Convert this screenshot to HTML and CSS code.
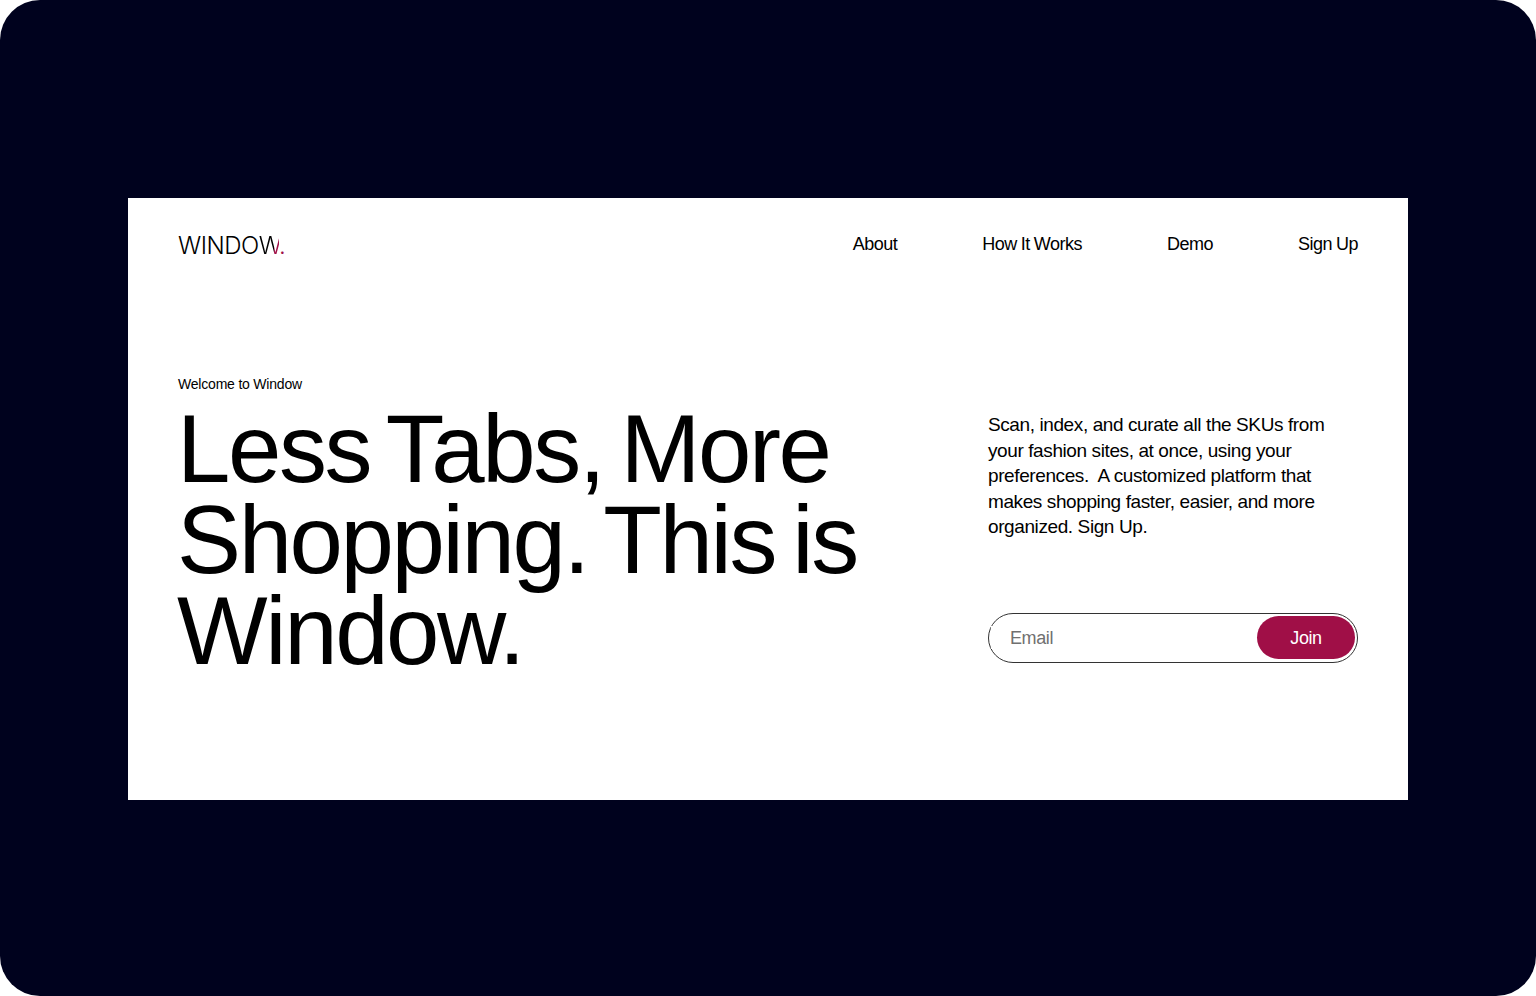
FILE: index.html
```html
<!DOCTYPE html>
<html lang="en">
<head>
    <meta charset="UTF-8">
    <title>Window</title>
    <link rel="stylesheet" href="styles.css">
</head>
<body>
    <div class="frame">
        <div class="page">
            <!-- Nav -->
            <div class="nav">
                <div class="logo">WINDO<span class="logo-w">W</span><span class="logo-dot">.</span></div>
                <div class="links">
                    <a href="#">About</a>
                    <a href="#">How It Works</a>
                    <a href="#">Demo</a>
                    <a href="#">Sign Up</a>
                </div>
            </div>

            <!-- Hero -->
            <div class="hero">
                <div class="hero-left">
                    <div class="welcome">Welcome to Window</div>
                    <h1>Less Tabs, More Shopping. This is Window.</h1>
                </div>
                <div class="hero-right">
                    <p>Scan, index, and curate all the SKUs from your fashion sites, at once, using your preferences.&nbsp; A customized platform that makes shopping faster, easier, and more organized. Sign Up.</p>
                    <form class="signup">
                        <input type="text" placeholder="Email">
                        <button type="button">Join</button>
                    </form>
                </div>
            </div>
        </div>
    </div>
</body>
</html>
```

FILE: styles.css
```css
html, body {
    margin: 0;
    height: 100%;
    background-color: #fff;
}

body {
    font-family: "Liberation Sans", Arial, sans-serif;
    color: #000;
    overflow: hidden;
}

.frame {
    height: 996px;
    box-sizing: border-box;
    background-color: #00021e;
    border-radius: 40px;
    padding: 198px 128px 196px;
}

.page {
    height: 602px;
    box-sizing: border-box;
    background-color: #fff;
    padding: 34px 50px 0;
}

.nav {
    display: flex;
    justify-content: space-between;
    align-items: center;
    height: 24px;
}

.logo {
    font-family: Inter, "Liberation Sans", sans-serif;
    font-size: 24px;
    font-weight: 300;
    letter-spacing: -0.5px;
    margin-top: 2px;
}

/* last stroke of the W is the accent colour */
.logo-w {
    background: linear-gradient(to right, #000 75%, #a00f47 75%);
    -webkit-background-clip: text;
    background-clip: text;
    color: transparent;
}

.logo-dot {
    color: #a00f47;
}

.links {
    display: flex;
    gap: 85px;
}

.links a {
    color: #000;
    text-decoration: none;
    font-size: 18px;
    letter-spacing: -0.5px;
    word-spacing: -0.5px;
}

.hero {
    display: flex;
    justify-content: space-between;
    margin-top: 116px;
}

.hero-left {
    width: 720px;
}

.welcome {
    font-size: 14px;
    letter-spacing: -0.2px;
    line-height: 24px;
}

h1 {
    margin: 7px 0 0 -1px;
    font-size: 96px;
    font-weight: normal;
    line-height: 91px;
    letter-spacing: -2.4px;
    word-spacing: -7px;
}

.hero-right {
    width: 370px;
    padding-top: 40px;
}

.hero-right p {
    margin: 0;
    font-size: 19px;
    line-height: 25.5px;
    letter-spacing: -0.4px;
    width: 345px;
}

.signup {
    display: flex;
    align-items: center;
    box-sizing: border-box;
    height: 50px;
    margin-top: 73px;
    border: 1px solid #333;
    border-radius: 25px;
    padding: 2px;
}

.signup input {
    flex: 1;
    min-width: 0;
    border: none;
    outline: none;
    padding: 2px 0 0 19px;
    font-family: inherit;
    font-size: 18px;
    letter-spacing: -0.4px;
}

.signup input::placeholder {
    color: #707070;
}

.signup button {
    width: 98px;
    height: 43px;
    border: none;
    border-radius: 22px;
    padding: 1px 0 0;
    background-color: #a00f47;
    color: #fff;
    font-family: inherit;
    font-size: 18px;
    letter-spacing: -0.4px;
    cursor: pointer;
}
```
